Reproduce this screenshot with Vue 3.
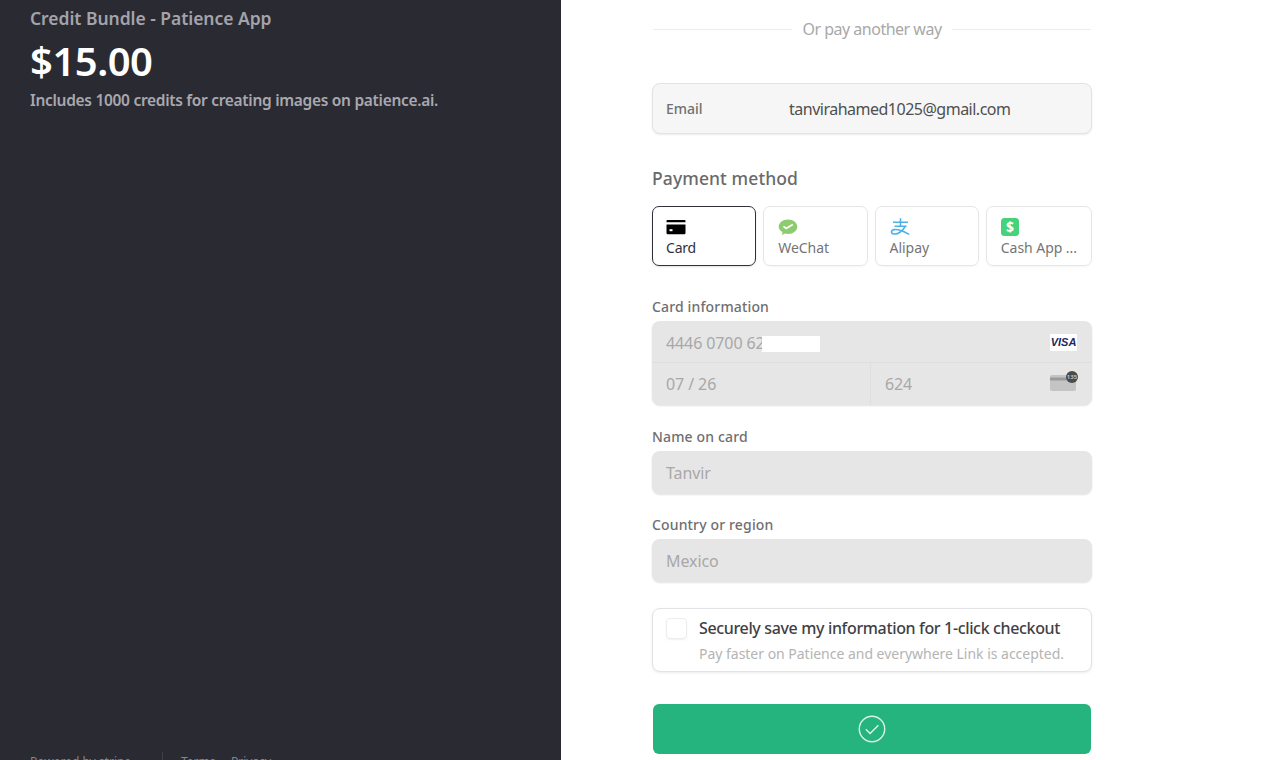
<script setup>
const tabs = [
  { id: 'card', label: 'Card', active: true },
  { id: 'wechat', label: 'WeChat' },
  { id: 'alipay', label: 'Alipay' },
  { id: 'cash', label: 'Cash App ...' },
]
</script>

<template>
  <div class="page">
    <aside class="summary">
      <div class="product">Credit Bundle - Patience App</div>
      <div class="price">$15.00</div>
      <div class="desc">Includes 1000 credits for creating images on patience.ai.</div>
      <div class="legal">
        <span class="powered">Powered by stripe</span>
        <span class="rule"></span>
        <span class="terms">Terms</span>
        <span>Privacy</span>
      </div>
    </aside>

    <main class="checkout">
      <div class="divider"><span class="line"></span><span class="or">Or pay another way</span><span class="line"></span></div>

      <div class="email">
        <span class="email-label">Email</span>
        <span class="email-value">tanvirahamed1025@gmail.com</span>
      </div>

      <h2 class="method">Payment method</h2>
      <div class="tabs">
        <div v-for="t in tabs" :key="t.id" class="tab" :class="{ active: t.active }">
          <svg v-if="t.id === 'card'" class="ico" viewBox="0 0 20 16" width="20" height="16">
            <path d="M1.5 1h17a1 1 0 0 1 1 1v1.2H.5V2a1 1 0 0 1 1-1z" fill="#000"/>
            <path d="M.5 5.6h19V14a1.2 1.2 0 0 1-1.2 1.2H1.7A1.2 1.2 0 0 1 .5 14z" fill="#000"/>
            <rect x="3.5" y="10.2" width="3" height="2" fill="#fff"/>
          </svg>
          <svg v-else-if="t.id === 'wechat'" class="ico" viewBox="0 0 20 16" width="20" height="16">
            <path d="M10 0.5c5.2 0 9.3 3.2 9.3 7.2S15.200 14.900 10 14.900c-1 0-2-.1-2.900-.4L4 16l.5-2.900C2.200 11.800.7 9.900.7 7.700.7 3.700 4.800.5 10 .5z" fill="#8ccb70"/>
            <path d="M5.500 7.300l2.600 2.200 6.700-4" fill="none" stroke="#fff" stroke-width="1.700"/>
          </svg>
          <svg v-else-if="t.id === 'alipay'" class="ico" viewBox="0 0 20 18" width="20" height="18">
            <g fill="none" stroke="#4fb0e6" stroke-width="1.600">
              <path d="M3 4.300h15M10.500.3v8.200M4.500 8.300h12"/>
              <path d="M15.200 8.300C13 12.800 8 16.500 3.800 16c-3.200-.4-3-3.800.2-4.400 3.500-.6 9.200 1.400 15.200 4.800"/>
            </g>
          </svg>
          <svg v-else class="ico" viewBox="1 1 18 18" width="18" height="18">
            <rect x="1" y="1" width="18" height="18" rx="3.500" fill="#44d37a"/>
            <text x="10" y="15.200" text-anchor="middle" class="dollar">$</text>
          </svg>
          <span class="tab-label">{{ t.label }}</span>
        </div>
      </div>

      <label class="field-label first">Card information</label>
      <div class="card-group">
        <div class="card-row">
          <span class="val">4446 0700 62</span>
          <span class="redact"></span>
          <span class="visa">VISA</span>
        </div>
        <div class="card-split">
          <div class="cell exp"><span class="val">07 / 26</span></div>
          <div class="cell cvc">
            <span class="val">624</span>
            <svg viewBox="0 0 30 20" width="30" height="20" class="cvc-ico">
              <rect x="1" y="4" width="26" height="16" rx="2" fill="#c4c4c4"/>
              <rect x="1" y="6.500" width="26" height="3" fill="#9a9a9a"/>
              <circle cx="23" cy="6" r="6" fill="#4b4b4b"/>
              <text x="23" y="8" text-anchor="middle" class="cvc-num">135</text>
            </svg>
          </div>
        </div>
      </div>

      <label class="field-label">Name on card</label>
      <div class="input"><span class="val">Tanvir</span></div>

      <label class="field-label">Country or region</label>
      <div class="input"><span class="val">Mexico</span></div>

      <div class="save">
        <span class="check"></span>
        <div class="save-text">
          <div class="save-title">Securely save my information for 1-click checkout</div>
          <div class="save-sub">Pay faster on Patience and everywhere Link is accepted.</div>
        </div>
      </div>

      <button class="pay" type="button" aria-label="Paid">
        <svg viewBox="0 0 28 28" width="28" height="28">
          <circle cx="14" cy="14" r="12.700" fill="none" stroke="#d9f3e8" stroke-width="1.400"/>
          <path d="M7.800 14.300l4.300 4.200 8.300-8.300" fill="none" stroke="#d9f3e8" stroke-width="1.400"/>
        </svg>
      </button>
    </main>
  </div>
</template>

<style>
html, body { margin: 0; background: #fff; overflow: hidden; }
</style>

<style scoped>
.page {
  display: flex;
  width: 1280px;
  height: 760px;
  overflow: hidden;
  background: #fff;
  font-family: "Noto Sans", "Open Sans", sans-serif;
}
.summary {
  flex: 0 0 561px;
  box-sizing: border-box;
  height: 772px;
  padding: 6px 0 0 30px;
  background: #2a2a33;
  display: flex;
  flex-direction: column;
}
.product {
  font-size: 17.5px;
  line-height: 24px;
  font-weight: 600;
  color: #a3a3aa;
  letter-spacing: -0.04px;
}
.price {
  margin-top: 7px;
  font-size: 40px;
  line-height: 48px;
  font-weight: 600;
  letter-spacing: -0.5px;
  color: #fff;
}
.desc {
  margin-top: 4px;
  font-size: 15.5px;
  line-height: 22px;
  font-weight: 600;
  letter-spacing: -0.3px;
  color: #a8a8ae;
}
.legal {
  margin-top: auto;
  display: flex;
  align-items: center;
  font-size: 12px;
  line-height: 18px;
  color: #85858c;
}
.rule { width: 1px; height: 20px; background: #3f3f47; margin-right: 18px; }
.powered { width: 132px; white-space: nowrap; }
.terms { width: 50px; }

.checkout {
  width: 440px;
  margin-left: 91px;
  padding-top: 18px;
  display: flex;
  flex-direction: column;
}
.divider {
  display: flex;
  align-items: center;
  gap: 10px;
  height: 22px;
  padding: 0 1px;
}
.line { flex: 1; height: 1px; background: #ececec; }
.or { font-size: 16px; line-height: 22px; color: #a8a8a8; letter-spacing: -0.5px; }

.email {
  margin-top: 43px;
  box-sizing: border-box;
  height: 51px;
  display: flex;
  align-items: center;
  padding-left: 13px;
  background: #f6f6f6;
  border: 1px solid #e3e3e3;
  border-radius: 8px;
  box-shadow: 0 1px 2px rgba(0, 0, 0, 0.08);
}
.email-label { width: 123px; font-size: 14px; font-weight: 500; color: #707070; letter-spacing: -0.05px; }
.email-value { font-size: 16px; color: #4f4f4f; letter-spacing: -0.5px; }

.method {
  margin: 31px 0 0;
  font-size: 17.5px;
  line-height: 26px;
  font-weight: 500;
  color: #6a6a6a;
  letter-spacing: 0.1px;
}
.tabs {
  margin-top: 15px;
  display: grid;
  grid-template-columns: repeat(4, 1fr);
  gap: 7px;
}
.tab {
  box-sizing: border-box;
  height: 60px;
  padding: 11px 14px 0;
  border: 1px solid #e6e6e6;
  border-radius: 7px;
  box-shadow: 0 1px 2px rgba(0, 0, 0, 0.04);
  display: flex;
  flex-direction: column;
  align-items: flex-start;
}
.tab.active {
  padding-left: 13px;
  border: 1.500px solid #30313d;
  box-shadow: 0 1px 2px rgba(0, 0, 0, 0.12);
}
.ico { height: 18px; flex: none; }
.dollar { font-size: 14px; font-weight: 700; fill: #fff; font-family: "Noto Sans", sans-serif; }
.cvc-num { font-size: 6px; font-weight: 600; fill: #d0d0d0; font-family: "Noto Sans", sans-serif; }
.tab-label {
  margin-top: 2px;
  font-size: 14px;
  line-height: 20px;
  font-weight: 400;
  color: #757575;
  white-space: nowrap;
  letter-spacing: -0.05px;
}
.tab.active .tab-label { color: #30313d; letter-spacing: -0.2px; }

.field-label {
  display: block;
  margin-top: 22px;
  font-size: 14px;
  line-height: 20px;
  font-weight: 500;
  color: #6f6f6f;
  letter-spacing: 0.15px;
}
.field-label.first { margin-top: 31px; }

.card-group {
  margin-top: 4px;
  height: 84px;
  box-sizing: border-box;
  background: #e6e6e6;
  border-radius: 8px;
  box-shadow: 0 1px 2px rgba(0, 0, 0, 0.12);
  display: flex;
  flex-direction: column;
}
.card-row {
  position: relative;
  height: 42px;
  box-sizing: border-box;
  border-bottom: 1px solid #dedede;
  padding: 2px 0 0 14px;
  display: flex;
  align-items: center;
}
.val { font-size: 16px; color: #a8a8a8; letter-spacing: -0.1px; }
.redact {
  position: absolute;
  left: 110px;
  top: 15px;
  width: 58px;
  height: 16px;
  background: #fff;
}
.visa {
  margin-left: auto;
  margin-right: 15px;
  width: 27px;
  height: 17px;
  background: #fff;
  color: #1c2a5e;
  font: italic 700 11px/17px "Liberation Sans", sans-serif;
  text-align: center;
}
.card-split { flex: 1; display: flex; }
.cell { display: flex; align-items: center; padding-left: 14px; box-sizing: border-box; }
.exp { width: 219px; border-right: 1px solid #dedede; }
.cvc { flex: 1; }
.cvc-ico { margin-left: auto; margin-right: 13px; margin-bottom: 6px; }

.input {
  margin-top: 4px;
  height: 43px;
  box-sizing: border-box;
  padding-left: 14px;
  display: flex;
  align-items: center;
  background: #e6e6e6;
  border-radius: 8px;
  box-shadow: 0 1px 2px rgba(0, 0, 0, 0.12);
}
.input + .field-label { margin-top: 21px; }

.save {
  margin-top: 26px;
  height: 64px;
  box-sizing: border-box;
  padding: 9px 12px 0 13px;
  display: flex;
  gap: 12px;
  background: #fff;
  border: 1px solid #e3e3e3;
  border-radius: 8px;
  box-shadow: 0 1px 3px rgba(0, 0, 0, 0.08);
}
.check {
  width: 21px;
  height: 21px;
  flex: none;
  box-sizing: border-box;
  border: 1px solid #ececec;
  border-radius: 4px;
  box-shadow: 0 1px 2px rgba(0, 0, 0, 0.06);
}
.save-title { font-size: 16px; line-height: 20px; font-weight: 500; color: #3f3f46; white-space: nowrap; letter-spacing: -0.35px; }
.save-sub { margin-top: 6px; font-size: 14px; line-height: 20px; color: #b4b4b4; white-space: nowrap; letter-spacing: -0.02px; }

.pay {
  margin: 32px 1px 0;
  height: 50px;
  border: 0;
  padding: 0;
  border-radius: 6px;
  background: #25b47e;
  display: flex;
  align-items: center;
  justify-content: center;
}
</style>
